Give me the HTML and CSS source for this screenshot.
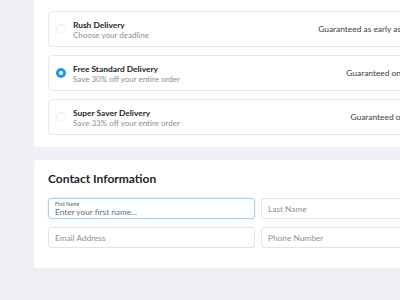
FILE: index.html
```
<!DOCTYPE html>
<html lang="en">

<head>
    <meta charset="UTF-8">
    <meta name="viewport" content="width=device-width, initial-scale=1.0">
    <title>Checkout - Delivery and Contact</title>
    <link rel="stylesheet" href="styles.css">
</head>

<body>
    <div class="page">
        <!-- Delivery options -->
        <div class="card delivery-card">
            <div class="option">
                <span class="radio"></span>
                <div class="option-text">
                    <div class="option-title">Rush Delivery</div>
                    <div class="option-sub">Choose your deadline</div>
                </div>
                <div class="option-date">Guaranteed as early as Thursday, Jun 13</div>
            </div>
            <div class="option">
                <span class="radio checked"></span>
                <div class="option-text">
                    <div class="option-title">Free Standard Delivery</div>
                    <div class="option-sub">Save 30% off your entire order</div>
                </div>
                <div class="option-date">Guaranteed on Thursday, Jun 20</div>
            </div>
            <div class="option">
                <span class="radio"></span>
                <div class="option-text">
                    <div class="option-title">Super Saver Delivery</div>
                    <div class="option-sub">Save 33% off your entire order</div>
                </div>
                <div class="option-date">Guaranteed on Tuesday, Jun 25</div>
            </div>
        </div>

        <!-- Contact information -->
        <div class="card contact-card">
            <h2 class="card-title">Contact Information</h2>
            <div class="form-grid">
                <label class="field focused">
                    <span class="field-label">First Name</span>
                    <input type="text" placeholder="Enter your first name...">
                </label>
                <label class="field">
                    <input type="text" placeholder="Last Name">
                </label>
                <label class="field">
                    <input type="text" placeholder="Email Address">
                </label>
                <label class="field">
                    <input type="text" placeholder="Phone Number">
                </label>
            </div>
        </div>
    </div>
</body>

</html>
```

FILE: styles.css
```
body {
    font-family: Lato, "Noto Sans", Arial, sans-serif;
    margin: 0;
    background-color: #eff0f3;
    color: #1d1e26;
    width: 400px;
    height: 300px;
    overflow: hidden;
}

.page {
    padding-left: 34px;
    width: 460px;
}

.card {
    background-color: #fff;
    border-radius: 4px;
    padding: 0 14px;
}

.delivery-card {
    margin-top: -8px;
    padding-top: 19px;
    padding-bottom: 12px;
    display: flex;
    flex-direction: column;
    gap: 8px;
}

.option {
    display: flex;
    align-items: center;
    height: 36px;
    box-sizing: border-box;
    border: 1px solid #e7e8ec;
    border-radius: 4px;
    padding: 0 14px 0 7px;
}

.radio {
    width: 10px;
    height: 10px;
    box-sizing: border-box;
    border: 1px solid #ececef;
    border-radius: 50%;
    margin-right: 7px;
    flex-shrink: 0;
}

.radio.checked {
    border: 3.5px solid #1e95ee;
    background-color: #fff;
}

.option-text {
    flex: 1;
    padding-top: 2px;
}

.option-title {
    font-size: 8.4px;
    font-weight: bold;
    line-height: 10px;
}

.option-sub {
    font-size: 8px;
    color: #8b8d94;
    line-height: 11px;
}

.option-date {
    font-size: 8.4px;
    color: #3a3b44;
    white-space: nowrap;
}

.contact-card {
    margin-top: 13px;
    height: 108px;
    box-sizing: border-box;
    padding-top: 12px;
}

.card-title {
    font-size: 12px;
    font-weight: bold;
    margin: 0 0 12px;
    line-height: 14px;
}

.form-grid {
    display: grid;
    grid-template-columns: 207px 207px;
    column-gap: 6px;
    row-gap: 8px;
}

.field {
    display: flex;
    flex-direction: column;
    justify-content: center;
    height: 21px;
    box-sizing: border-box;
    border: 1px solid #e2e3e7;
    border-radius: 3px;
    padding: 0 6px;
}

.field.focused {
    border-color: #a9d3f3;
    box-shadow: 0 0 2px rgba(30, 149, 238, 0.25);
}

.field-label {
    font-size: 5px;
    color: #555;
    line-height: 6px;
}

.field input {
    border: none;
    outline: none;
    padding: 0;
    font-family: inherit;
    font-size: 8.3px;
    line-height: 10px;
    color: #333;
    background: transparent;
}

.field input::placeholder {
    color: #8e9097;
}

.field.focused input::placeholder {
    color: #6b6d74;
}
```
